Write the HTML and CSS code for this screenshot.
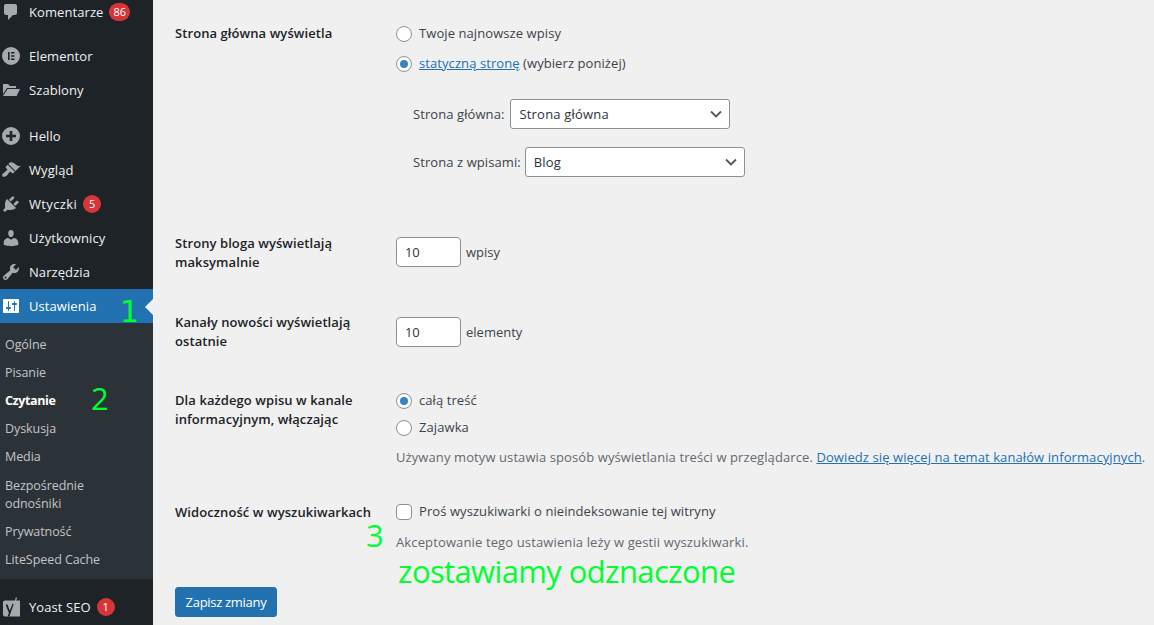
FILE: index.html
```html
<!DOCTYPE html>
<html lang="pl">
<head>
<meta charset="utf-8">
<title>Ustawienia czytania</title>
<link rel="stylesheet" href="styles.css">
</head>
<body>
<div class="page">
  <nav class="side">
    <ul class="menu">
      <li class="item"><svg class="ico" viewBox="0 0 20 20"><path d="M5 2h9c1.100 0 2 .900 2 2v7c0 1.100-.900 2-2 2h-2l-5 5v-5H5c-1.100 0-2-.900-2-2V4c0-1.100.900-2 2-2z"/></svg>Komentarze<span class="badge">86</span></li>
      <li class="item sep"><svg class="ico" viewBox="0 0 20 20"><path fill-rule="evenodd" d="M10 1a9 9 0 1 0 0 18 9 9 0 0 0 0-18zM7 6h1.600v8H7zM10 6h3.500v1.600H10zM10 9.200h3.500v1.600H10zM10 12.400h3.500V14H10z"/></svg>Elementor</li>
      <li class="item"><svg class="ico" viewBox="0 0 20 20"><path d="M2 4h5l2 2h6v2H6L2 14zM6.600 9H19l-3.400 7H2z"/></svg>Szablony</li>
      <li class="item sep-big"><svg class="ico" viewBox="0 0 20 20"><path fill-rule="evenodd" d="M10 1a9 9 0 1 0 0 18 9 9 0 0 0 0-18zM8.700 5h2.600v3.700H15v2.600h-3.700V15H8.700v-3.700H5V8.700h3.700z"/></svg>Hello</li>
      <li class="item"><svg class="ico" viewBox="0 0 20 20"><path d="M14.480 11.060L7.410 3.990l1.500-1.500c.5-.56 2.300-.47 3.510.32 1.210.8 1.430 1.280 2.910 2.100 1.180.64 2.450 1.260 4.450.85zm-.71.71L6.700 4.700 4.930 6.470c-.39.39-.39 1.020 0 1.410l1.060 1.060c.39.39.39 1.030 0 1.420-.6.6-1.430 1.110-2.210 1.690-.35.26-.7.53-1.010.84C1.430 13.230.930 15 1.500 16.500c1.500.57 3.270.07 4.610-1.270.31-.31.58-.66.84-1.010.58-.78 1.090-1.610 1.690-2.210.39-.39 1.030-.39 1.420 0l1.060 1.060c.39.39 1.020.39 1.410 0z"/></svg>Wygląd</li>
      <li class="item wide"><svg class="ico" viewBox="0 0 20 20"><path d="M13.110 4.360L9.870 7.600 8 5.730l3.240-3.240c.35-.34 1.050-.2 1.560.32.52.51.66 1.210.31 1.550zm-8 1.770l.91-1.120 9.010 9.010-1.190.84c-.71.71-2.630 1.160-3.820 1.160H6.140L4.900 17.260c-.59.59-1.540.59-2.120 0-.59-.58-.59-1.530 0-2.120l1.240-1.240v-3.880c0-1.130.4-3.190 1.090-3.890zm7.260 3.970l3.240-3.240c.34-.35 1.040-.21 1.550.31.52.51.66 1.210.31 1.550l-3.240 3.250z"/></svg>Wtyczki<span class="badge">5</span></li>
      <li class="item"><svg class="ico" viewBox="0 0 20 20"><path d="M10 9.250c-2.270 0-2.730-3.440-2.730-3.440C7 4.020 7.820 2 9.970 2c2.160 0 2.980 2.020 2.710 3.810 0 0-.41 3.440-2.680 3.440zm0 2.570L12.720 10c2.390 0 4.520 2.330 4.520 4.530v2.490s-3.650 1.130-7.240 1.130c-3.650 0-7.240-1.130-7.240-1.130v-2.490c0-2.250 1.940-4.480 4.470-4.480z"/></svg>Użytkownicy</li>
      <li class="item"><svg class="ico" viewBox="0 0 20 20"><path d="M16.680 9.770c-1.340 1.340-3.300 1.670-4.950.99l-5.410 6.520c-.99.99-2.590.99-3.580 0s-.99-2.590 0-3.570l6.520-5.420c-.68-1.650-.35-3.610.99-4.950 1.280-1.280 3.120-1.620 4.720-1.060l-2.890 2.890 2.820 2.820 2.860-2.870c.53 1.580.18 3.390-1.080 4.650zM3.810 16.210c.4.39 1.040.39 1.430 0 .4-.4.4-1.040 0-1.430-.39-.4-1.030-.4-1.430 0-.39.39-.39 1.030 0 1.430z"/></svg>Narzędzia</li>
      <li class="item active"><svg class="ico" viewBox="0 0 20 20"><path d="M18 16V4c0-.55-.45-1-1-1H3c-.55 0-1 .45-1 1v12c0 .55.45 1 1 1h14c.55 0 1-.45 1-1zM8 11h1c.55 0 1 .45 1 1s-.45 1-1 1H8v1.500c0 .28-.22.5-.5.5s-.5-.22-.5-.5V13H6c-.55 0-1-.45-1-1s.45-1 1-1h1V5.500c0-.28.22-.5.5-.5s.5.22.5.5V11zm5-2h-1c-.55 0-1-.45-1-1s.45-1 1-1h1V5.500c0-.28.22-.5.5-.5s.5.22.5.5V7h1c.55 0 1 .45 1 1s-.45 1-1 1h-1v5.500c0 .28-.22.5-.5.5s-.5-.22-.5-.5V9z"/></svg>Ustawienia</li>
    </ul>
    <ul class="sub">
      <li>Ogólne</li>
      <li>Pisanie</li>
      <li class="cur">Czytanie</li>
      <li>Dyskusja</li>
      <li>Media</li>
      <li class="two">Bezpośrednie odnośniki</li>
      <li>Prywatność</li>
      <li>LiteSpeed Cache</li>
    </ul>
    <ul class="menu last">
      <li class="item"><svg class="ico" viewBox="0 0 20 20"><path d="M4 3.500h14.500a.5.5 0 0 1 .5.5v15a.5.5 0 0 1-.5.5H4a2 2 0 0 1-2-2v-12a2 2 0 0 1 2-2z"/><path class="y" d="M5.500 7.500l3.300 8.500-1.300 3.500"/><path class="y" d="M8.800 16l3.600-9"/><path class="slash" d="M9.500 19L15.500 0.500"/></svg>Yoast SEO<span class="badge">1</span></li>
    </ul>
  </nav>
  <main class="main">
    <div class="row first">
      <div class="label">Strona główna wyświetla</div>
      <div class="field">
        <label class="opt"><input type="radio" name="front" class="radio"><span>Twoje najnowsze wpisy</span></label>
        <label class="opt second"><input type="radio" name="front" class="radio" checked><span><a class="link" href="#">statyczną stronę</a> (wybierz poniżej)</span></label>
        <div class="pick pick-one">
          <span>Strona główna:</span>
          <span class="sel">
            <select class="select"><option>Strona główna</option></select>
            <svg class="chev" viewBox="0 0 12 8"><path d="M1 1.500l5 5 5-5"/></svg>
          </span>
        </div>
        <div class="pick pick-two">
          <span>Strona z wpisami:</span>
          <span class="sel">
            <select class="select"><option>Blog</option></select>
            <svg class="chev" viewBox="0 0 12 8"><path d="M1 1.500l5 5 5-5"/></svg>
          </span>
        </div>
      </div>
    </div>
    <div class="row r2">
      <div class="label">Strony bloga wyświetlają maksymalnie</div>
      <div class="field inline"><input class="num" type="text" value="10"><span>wpisy</span></div>
    </div>
    <div class="row r3">
      <div class="label">Kanały nowości wyświetlają ostatnie</div>
      <div class="field inline"><input class="num" type="text" value="10"><span>elementy</span></div>
    </div>
    <div class="row r4">
      <div class="label">Dla każdego wpisu w kanale informacyjnym, włączając</div>
      <div class="field">
        <label class="opt"><input type="radio" name="feed" class="radio" checked><span>całą treść</span></label>
        <label class="opt third"><input type="radio" name="feed" class="radio"><span>Zajawka</span></label>
        <p class="desc d1">Używany motyw ustawia sposób wyświetlania treści w przeglądarce. <a class="link" href="#">Dowiedz się więcej na temat kanałów informacyjnych</a>.</p>
      </div>
    </div>
    <div class="row r5">
      <div class="label">Widoczność w wyszukiwarkach</div>
      <div class="field">
        <label class="opt"><input type="checkbox" class="check"><span>Proś wyszukiwarki o nieindeksowanie tej witryny</span></label>
        <p class="desc d2">Akceptowanie tego ustawienia leży w gestii wyszukiwarki.</p>
      </div>
    </div>
    <button class="save" type="button">Zapisz zmiany</button>
  </main>
  <span class="note n1">1</span>
  <span class="note n2">2</span>
  <span class="note n3">3</span>
  <span class="note n4">zostawiamy odznaczone</span>
</div>
</body>
</html>
```
FILE: styles.css
```css
* { box-sizing: border-box; }
html, body { margin: 0; padding: 0; height: 100%; overflow: hidden; }
body { background: #f0f0f1; font-family: "Open Sans", "Noto Sans", sans-serif; font-size: 13px; line-height: 19px; color: #3c434a; }
.page { position: relative; display: flex; width: 1154px; height: 625px; overflow: hidden; }

/* sidebar */
.side { width: 153px; flex: none; background: #1d2327; color: #f0f0f1; }
.menu, .sub { list-style: none; margin: 0; padding: 0; }
.menu { margin-top: -5px; }
.sub + .menu { margin-top: 11px; }
.item { position: relative; display: flex; align-items: center; height: 34px; padding-left: 1px; color: #f0f0f1; letter-spacing: .08px; }
.wide { letter-spacing: .35px; }
.sep { margin-top: 10px; }
.sep-big { margin-top: 12px; }
.ico { width: 20px; height: 20px; margin-right: 8px; fill: #a7aaad; flex: none; overflow: visible; }
.ico .y { fill: none; stroke: #1d2327; stroke-width: 1.800; }
.ico .slash { fill: none; stroke: #a7aaad; stroke-width: 1.200; }
.badge { display: inline-block; min-width: 18px; height: 18px; padding: 0 4px; margin-left: 6px; border-radius: 9px; background: #d63638; color: #fff; font-size: 11px; line-height: 18px; text-align: center; letter-spacing: 0; }
.active { background: #2271b1; color: #fff; }
.active .ico { fill: #fff; }
.active::after { content: ""; position: absolute; right: 0; top: 50%; margin-top: -7px; border: 8px solid transparent; border-right-color: #f0f0f1; }
.sub { background: #2c3338; padding: 8px 0 5px; color: #c3c4c7; }
.sub li { padding: 5px; font-size: 12.500px; line-height: 18px; letter-spacing: -.07px; width: 125px; }
.sub .cur { color: #fff; font-weight: 700; letter-spacing: -.4px; }
.sub .two { padding-top: 6px; }

/* main */
.main { flex: 1; padding-left: 22px; display: flex; flex-direction: column; align-items: flex-start; }
.row { display: grid; grid-template-columns: 221px 1fr; }
.first { margin-top: 24px; }
.r2 { margin-top: 56px; }
.r2 .label { padding-top: 1px; }
.r3 { margin-top: 41px; }
.r4 { margin-top: 40px; }
.r5 { margin-top: 35px; }
.r5 .label { padding-top: 1px; }
.label { font-weight: 600; color: #1d2327; width: 200px; letter-spacing: .08px; }
.field { letter-spacing: .08px; }
.inline { display: flex; align-items: center; height: 30px; gap: 5px; margin-top: 4px; letter-spacing: 0; }
.opt { display: flex; align-items: center; gap: 7px; height: 19px; }
.opt.second { margin-top: 11px; }
.opt.third { margin-top: 8px; }
.radio, .check { appearance: none; margin: 0; width: 16px; height: 16px; background: #fff; border: 1px solid #8c8f94; flex: none; }
.radio { border-radius: 50%; position: relative; }
.radio:checked::before { content: ""; position: absolute; left: 3px; top: 3px; width: 8px; height: 8px; border-radius: 50%; background: #3582c4; }
.check { border-radius: 4px; }
.link { color: #2271b1; text-decoration: underline; }
.pick { display: flex; align-items: center; gap: 4px; padding-left: 17px; height: 30px; }
.pick-one { margin-top: 26px; gap: 6px; }
.pick-two { margin-top: 18px; }
.sel { position: relative; display: block; width: 220px; height: 30px; }
.select { appearance: none; width: 100%; height: 100%; margin: 0; padding: 0 24px 0 8px; border: 1px solid #8c8f94; border-radius: 3px; background: #fff; color: #2c3338; font: inherit; letter-spacing: .2px; }
.chev { position: absolute; right: 8px; top: 11px; width: 12px; height: 8px; fill: none; stroke: #50575e; stroke-width: 1.800; pointer-events: none; }
.num { width: 65px; height: 30px; margin: 0; padding: 0 8px; border: 1px solid #8c8f94; border-radius: 4px; background: #fff; color: #2c3338; font: inherit; letter-spacing: -.25px; }
.desc { margin: 0; color: #646970; white-space: nowrap; }
.d1 { margin-top: 11px; letter-spacing: .095px; }
.d2 { margin-top: 12px; letter-spacing: .13px; }
.save { margin-top: 35px; width: 102px; height: 30px; padding: 0; border: 1px solid #2271b1; border-radius: 3px; background: #2271b1; color: #fff; font: inherit; letter-spacing: -.3px; }

/* green annotations laid over the screenshot */
.note { position: absolute; color: #00ff2e; font-family: "Open Sans", sans-serif; font-size: 31px; line-height: 36px; }
.n1 { left: 120px; top: 294px; font-family: "DejaVu Sans", sans-serif; font-size: 30px; font-weight: 400; }
.n2 { left: 91px; top: 380px; }
.n3 { left: 366px; top: 517px; }
.n4 { left: 398px; top: 553px; letter-spacing: -.63px; }
```
